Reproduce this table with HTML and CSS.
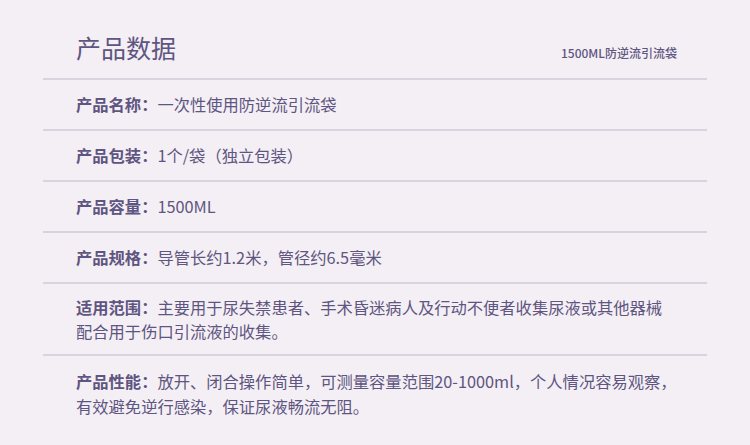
FILE: index.html
```html
<!DOCTYPE html>
<html lang="zh-CN">
<head>
<meta charset="utf-8">
<link rel="stylesheet" href="styles.css">
</head>
<body>
<div class="page">
  <div class="header">
    <h1 class="title">产品数据</h1>
    <span class="subtitle">1500ML防逆流引流袋</span>
  </div>
  <div class="row"><span class="label">产品名称：</span>一次性使用防逆流引流袋</div>
  <div class="row"><span class="label">产品包装：</span>1个/袋（独立包装）</div>
  <div class="row"><span class="label">产品容量：</span>1500ML</div>
  <div class="row"><span class="label">产品规格：</span>导管长约1.2米，管径约6.5毫米</div>
  <div class="row multi"><span class="label">适用范围：</span>主要用于尿失禁患者、手术昏迷病人及行动不便者收集尿液或其他器械配合用于伤口引流液的收集。</div>
  <div class="row multi last"><span class="label">产品性能：</span>放开、闭合操作简单，可测量容量范围20-1000ml，个人情况容易观察，有效避免逆行感染，保证尿液畅流无阻。</div>
</div>
</body>
</html>
```

FILE: styles.css
```css
html, body {
  margin: 0;
  padding: 0;
  background: #f3eff4;
}
body {
  width: 750px;
  height: 445px;
  overflow: hidden;
  font-family: "Noto Sans CJK SC", "Noto Sans", sans-serif;
  color: #5f5581;
}
.page {
  padding: 0 43px;
}
.header {
  display: flex;
  justify-content: space-between;
  align-items: baseline;
  padding: 29px 30px 13px 33px;
  border-bottom: 2px solid #d9d3df;
}
.title {
  margin: 0;
  font-size: 25px;
  line-height: 36px;
  font-weight: 400;
  color: #5f5581;
}
.subtitle {
  font-size: 12px;
  font-weight: 500;
  color: #5f5581;
}
.row {
  padding: 12px 30px 13px 33px;
  font-size: 16.3px;
  line-height: 24px;
  border-bottom: 2px solid #d9d3df;
}
.row.multi {
  padding-top: 11px;
  padding-bottom: 11px;
}
.row.last {
  border-bottom: none;
  padding-top: 13px;
  line-height: 25px;
}
.label {
  font-weight: 700;
}
```
